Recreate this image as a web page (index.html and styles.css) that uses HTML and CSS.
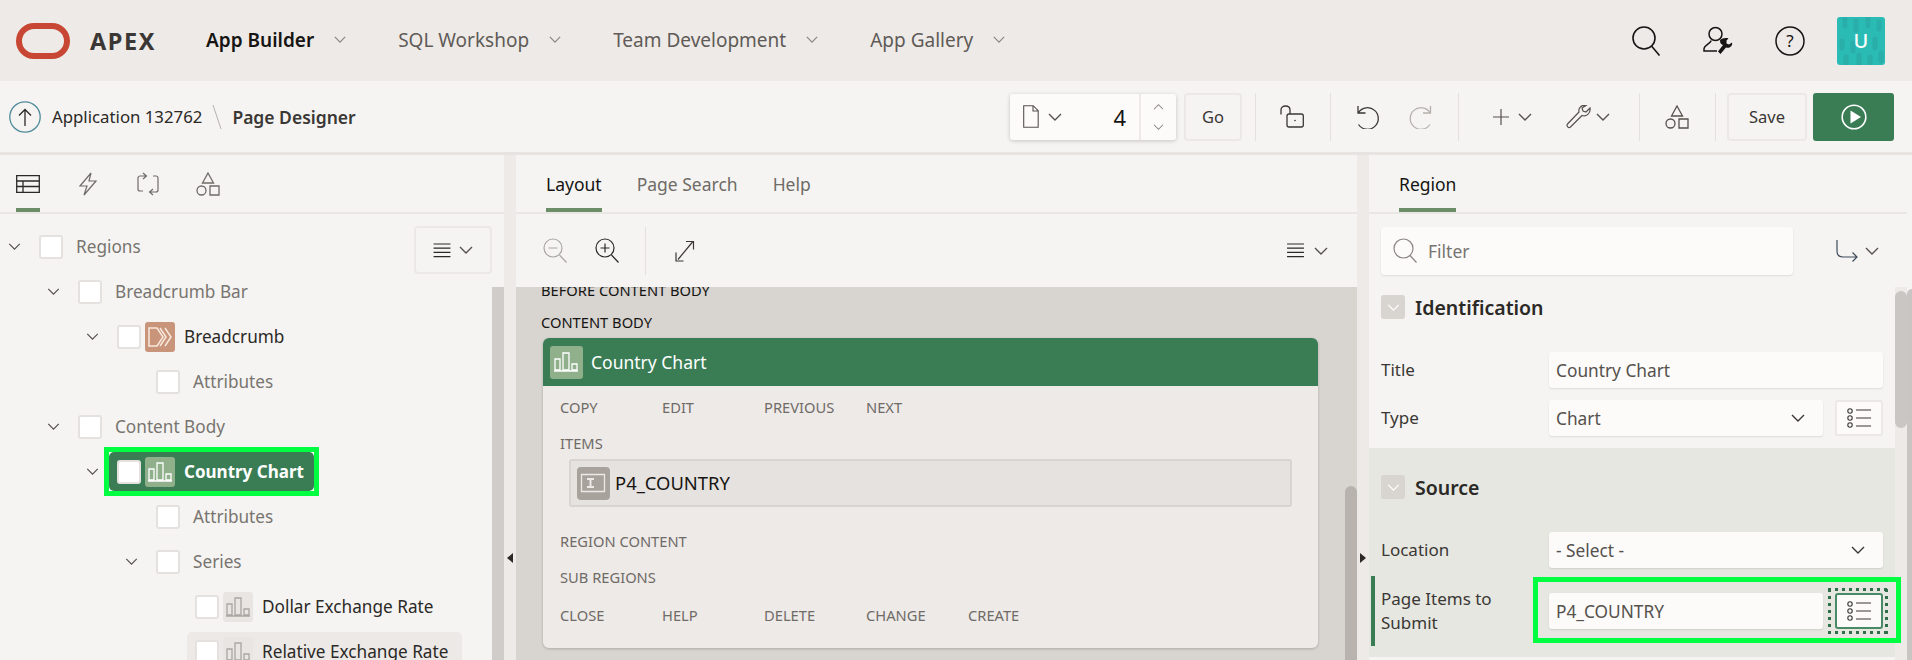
FILE: index.html
```html
<!DOCTYPE html>
<html>
<head>
<meta charset="utf-8">
<title>Page Designer</title>
<link rel="stylesheet" href="styles.css">
</head>
<body>

<svg class="defs" width="0" height="0">
  <symbol id="chev" viewBox="0 0 14 8"><path d="M1 1l6 6 6-6" fill="none" stroke="currentColor" stroke-width="1.4"/></symbol>
  <symbol id="shapes" viewBox="0 0 24 24"><path d="M12 1l5.500 10h-11z M14 14h9v9h-9z" fill="none" stroke="currentColor" stroke-width="1.3"/><circle cx="5.500" cy="18.500" r="4.500" fill="none" stroke="currentColor" stroke-width="1.3"/></symbol>
  <symbol id="menu" viewBox="0 0 18 16"><path d="M0 1h18M0 5.500h18M0 10h18M0 14.500h18" fill="none" stroke="currentColor" stroke-width="1.2"/></symbol>
  <symbol id="chart" viewBox="0 0 30 30"><path d="M4 12h5v11H4z M12 6h6v17h-6z M21 17h5v6h-5z M3 24h24" fill="none" stroke="currentColor" stroke-width="1.3"/></symbol>
  <symbol id="list" viewBox="0 0 24 20"><circle cx="3" cy="3" r="2.200" fill="none" stroke="currentColor" stroke-width="1.100"/><circle cx="3" cy="10" r="2.200" fill="none" stroke="currentColor" stroke-width="1.100"/><circle cx="3" cy="17" r="2.200" fill="none" stroke="currentColor" stroke-width="1.100"/><path d="M9 2h15M9 10h15M9 18h15" fill="none" stroke="currentColor" stroke-width="1.100"/></symbol>
</svg>

<div class="topbar">
  <svg class="logo" width="54" height="36" viewBox="0 0 54 36"><rect x="3" y="3" width="48" height="30" rx="15" fill="none" stroke="#c74634" stroke-width="6"/></svg>
  <span class="brand">APEX</span>
  <div class="nav">
    <span class="nav-item active">App Builder <svg class="chev-s"><use href="#chev"/></svg></span>
    <span class="nav-item">SQL Workshop <svg class="chev-s"><use href="#chev"/></svg></span>
    <span class="nav-item">Team Development <svg class="chev-s"><use href="#chev"/></svg></span>
    <span class="nav-item">App Gallery <svg class="chev-s"><use href="#chev"/></svg></span>
  </div>
  <div class="top-right">
    <svg width="30" height="30" viewBox="0 0 30 30"><circle cx="13" cy="12" r="11" fill="none" stroke="#161513" stroke-width="1.600"/><path d="M20.500 20l8 9.500" stroke="#161513" stroke-width="1.600"/></svg>
    <svg width="30" height="30" viewBox="0 0 30 30"><circle cx="12.500" cy="8" r="6.500" fill="none" stroke="#161513" stroke-width="1.500"/><path d="M8 14.500c0 3-7 4.500-7 8.500v2h13" fill="none" stroke="#161513" stroke-width="1.500"/><path d="M17 14.500c0 3 1.500 4 3 4.500l-5 6.500 2.500 2.500 5.500-6.500c3 1 7-1 6-5l-3 2-2.500-1 0-3 2-2c-3-1-8 0-8.500 2z" fill="#161513"/></svg>
    <svg width="30" height="30" viewBox="0 0 30 30"><circle cx="15" cy="15" r="14" fill="none" stroke="#161513" stroke-width="1.500"/><text x="15" y="20.500" text-anchor="middle" class="help-q">?</text></svg>
    <div class="avatar">
      <svg class="avatar-bg" width="48" height="48" viewBox="0 0 48 48"><path d="M8 2v7M19 4v9M31 1v8M42 5v7M5 24v7M16 26v8M38 22v9M9 40v7M22 38v9M33 40v7M44 36v8" fill="none" stroke="#29aea9" stroke-width="5" stroke-linecap="round"/></svg>
      <span class="avatar-txt">U</span>
    </div>
  </div>
</div>

<div class="toolbar">
  <svg class="up" width="32" height="32" viewBox="0 0 32 32"><circle cx="16" cy="16" r="15.200" fill="none" stroke="#4f8a9a" stroke-width="1.300"/><path d="M16 25V9M10 14.500L16 8.500l6 6" fill="none" stroke="#2b2926" stroke-width="1.300"/></svg>
  <span class="crumb">Application 132762</span>
  <svg class="slash" width="10" height="24" viewBox="0 0 10 24"><path d="M1 0l8 24" stroke="#b5b1ad" stroke-width="1"/></svg>
  <span class="crumb-cur">Page Designer</span>

  <div class="tools">
    <div class="page-box">
      <svg width="16" height="23" viewBox="0 0 16 23"><path d="M.7.700h9.500l5 5v16.600H.7z M10 1v5h5" fill="none" stroke="#55514d" stroke-width="1.100"/></svg>
      <svg class="chev-t"><use href="#chev"/></svg>
      <span class="page-num">4</span>
      <div class="page-spin">
        <svg class="chev-u"><use href="#chev"/></svg>
        <svg class="chev-d"><use href="#chev"/></svg>
      </div>
    </div>
    <span class="btn btn-go">Go</span>
    <span class="sep sep-go"></span>
    <svg width="24" height="24" viewBox="0 0 24 24"><path d="M1 9.500V5c0-2.500 2-4 4.500-4S10 2.500 10 5v4" fill="none" stroke="#3a3735" stroke-width="1.300"/><rect x="7" y="9" width="16.300" height="13" rx="2" fill="none" stroke="#3a3735" stroke-width="1.300"/><circle cx="15" cy="15.500" r=".8" fill="#3a3735"/></svg>
    <span class="sep"></span>
    <svg class="undo-i" width="23" height="24" viewBox="0 0 23 24"><path d="M1 1v7h7.500 M1.500 7.500A10.800 10.800 0 1 1 1.500 19.500" fill="none" stroke="#3a3735" stroke-width="1.300"/></svg>
    <svg class="redo-i" width="24" height="24" viewBox="0 0 24 24"><path d="M22.500 1v7h-7.500 M22 7.500A10.800 10.800 0 1 0 22 19.500" fill="none" stroke="#b5b1ad" stroke-width="1.300"/></svg>
    <span class="sep"></span>
    <svg class="plus-i" width="16" height="16" viewBox="0 0 16 16"><path d="M8 0v16M0 8h16" stroke="#55514d" stroke-width="1.200"/></svg>
    <svg class="chev-t chev-plus"><use href="#chev"/></svg>
    <svg class="wrench-i" width="25" height="24" viewBox="0 0 25 24"><path d="M24 3l-4 4-3-1-1-3 4-2.500c-4-1-8 2-7 6.500L1.500 19c-1.500 2 1 4.500 3 3L16 10.500c4 1.500 9-2 8-7.500z" fill="none" stroke="#55514d" stroke-width="1.200"/></svg>
    <svg class="chev-t chev-wrench"><use href="#chev"/></svg>
    <span class="sep sep-wrench"></span>
    <svg class="shapes-t" width="24" height="24"><use href="#shapes"/></svg>
    <span class="sep sep-save"></span>
    <span class="btn btn-save">Save</span>
    <span class="btn-run">
      <svg width="26" height="26" viewBox="0 0 26 26"><circle cx="13" cy="13" r="11.800" fill="none" stroke="#fff" stroke-width="1.600"/><path d="M9.500 6.500L20 13 9.500 19.500z" fill="#fff"/></svg>
    </span>
  </div>
</div>

<div class="main">

  <div class="panel">
    <div class="tabs tabs-icons">
      <span class="tab tab-on">
        <svg width="24" height="18" viewBox="0 0 24 18"><path d="M.7.700h22.600v16.600H.7z M.7 6h22.600 M7 6v11.300 M.7 11.500H23.300" fill="none" stroke="#2b2926" stroke-width="1.300"/></svg>
      </span>
      <span class="tab"><svg width="24" height="24" viewBox="0 0 24 24"><path d="M15 1L4 14h7l-3 9 12-14h-7z" fill="none" stroke="#6f6b67" stroke-width="1.200"/></svg></span>
      <span class="tab"><svg width="24" height="24" viewBox="0 0 24 24"><path d="M10 4H4a2 2 0 0 0-2 2v11a2 2 0 0 0 2 2h3 M14 20h6a2 2 0 0 0 2-2V6a2 2 0 0 0-2-2h-3 M7 1l3.500 3L7 7 M17 17l-3.500 3 3.500 3" fill="none" stroke="#6f6b67" stroke-width="1.200"/></svg></span>
      <span class="tab"><svg class="muted" width="24" height="24"><use href="#shapes"/></svg></span>
    </div>
    <div class="tree">
      <span class="btn tree-menu"><svg class="menu-i" width="18" height="15"><use href="#menu"/></svg><svg class="chev-t"><use href="#chev"/></svg></span>
      <div class="tree-scroll"></div>

      <div class="row"><svg class="tw"><use href="#chev"/></svg><span class="cb"></span><span class="lbl muted-t">Regions</span></div>
      <div class="row lv1"><svg class="tw"><use href="#chev"/></svg><span class="cb"></span><span class="lbl muted-t">Breadcrumb Bar</span></div>
      <div class="row lv2">
        <svg class="tw"><use href="#chev"/></svg><span class="cb"></span>
        <span class="ico ico-crumb"><svg width="30" height="30" viewBox="0 0 30 30"><path d="M4 6h8l6 9-6 9H4z M15 6l6 9-6 9 M20 6l6 9-6 9" fill="none" stroke="#f8e8dc" stroke-width="1.500"/></svg></span>
        <span class="lbl">Breadcrumb</span>
      </div>
      <div class="row lv3"><span class="tw"></span><span class="cb"></span><span class="lbl muted-t">Attributes</span></div>
      <div class="row lv1"><svg class="tw"><use href="#chev"/></svg><span class="cb"></span><span class="lbl muted-t">Content Body</span></div>
      <div class="row lv2">
        <svg class="tw"><use href="#chev"/></svg>
        <div class="row-sel"><div class="row-box row-box-on">
          <span class="cb"></span>
          <span class="ico ico-chart"><svg width="30" height="30"><use href="#chart"/></svg></span>
          <span class="lbl lbl-on">Country Chart</span>
        </div></div>
      </div>
      <div class="row lv3"><span class="tw"></span><span class="cb"></span><span class="lbl muted-t">Attributes</span></div>
      <div class="row lv3"><svg class="tw"><use href="#chev"/></svg><span class="cb"></span><span class="lbl muted-t">Series</span></div>
      <div class="row lv4">
        <span class="tw"></span><span class="cb"></span>
        <span class="ico ico-grey"><svg width="30" height="30"><use href="#chart"/></svg></span>
        <span class="lbl">Dollar Exchange Rate</span>
      </div>
      <div class="row lv4">
        <span class="tw"></span>
        <div class="row-box row-box-hover">
          <span class="cb"></span>
          <span class="ico ico-grey"><svg width="30" height="30"><use href="#chart"/></svg></span>
          <span class="lbl">Relative Exchange Rate</span>
        </div>
      </div>
    </div>
  </div>

  <div class="gutter"><span class="arrow-l"></span></div>

  <div class="panel">
    <div class="tabs tabs-text">
      <span class="tab tab-on">Layout</span>
      <span class="tab">Page Search</span>
      <span class="tab">Help</span>
    </div>
    <div class="grid-tools">
      <svg width="24" height="25" viewBox="0 0 24 25"><circle cx="10" cy="10" r="9" fill="none" stroke="#aaa6a2" stroke-width="1.200"/><path d="M5.500 10h9M16.500 17l7 7.500" fill="none" stroke="#aaa6a2" stroke-width="1.200"/></svg>
      <svg class="zoom-in" width="24" height="25" viewBox="0 0 24 25"><circle cx="10" cy="10" r="9" fill="none" stroke="#2b2926" stroke-width="1.200"/><path d="M5.500 10h9M10 5.500v9M16.500 17l7 7.500" fill="none" stroke="#2b2926" stroke-width="1.200"/></svg>
      <span class="sep sep-grid"></span>
      <svg width="20" height="22" viewBox="0 0 20 22"><path d="M3 19.500L17.500 2 M11 1.500h7.500v8 M1 12.500v8.500h7.500" fill="none" stroke="#3a3735" stroke-width="1.200"/></svg>
      <span class="grid-menu"><svg class="menu-g" width="17" height="15"><use href="#menu"/></svg><svg class="chev-t"><use href="#chev"/></svg></span>
    </div>
    <div class="canvas">
      <div class="canvas-scroll"></div>
      <div class="slot slot-clip">BEFORE CONTENT BODY</div>
      <div class="slot slot-body">CONTENT BODY</div>
      <div class="card">
        <div class="card-head">
          <span class="ico ico-chart ico-tall"><svg width="30" height="30"><use href="#chart"/></svg></span>
          <span class="card-title">Country Chart</span>
        </div>
        <div class="card-body">
          <div class="cells"><span>COPY</span><span>EDIT</span><span>PREVIOUS</span><span>NEXT</span></div>
          <div class="slot-name slot-items">ITEMS</div>
          <div class="item">
            <span class="item-ico"><svg width="33" height="33" viewBox="0 0 33 33"><path d="M4.500 7.500h23v17h-23z" fill="none" stroke="#ece9e6" stroke-width="1.300"/><path d="M10 12h7M10 20h7M13.500 12v8" fill="none" stroke="#ece9e6" stroke-width="2"/></svg></span>
            <span class="item-txt">P4_COUNTRY</span>
          </div>
          <div class="slot-name slot-content">REGION CONTENT</div>
          <div class="slot-name slot-sub">SUB REGIONS</div>
          <div class="cells cells-end"><span>CLOSE</span><span>HELP</span><span>DELETE</span><span>CHANGE</span><span>CREATE</span></div>
        </div>
      </div>
    </div>
  </div>

  <div class="gutter"><span class="arrow-r"></span></div>

  <div class="panel">
    <div class="tabs tabs-text">
      <span class="tab tab-on">Region</span>
    </div>
    <div class="prop-tools">
      <div class="filter">
        <svg width="24" height="25" viewBox="0 0 24 25"><circle cx="10.500" cy="10.500" r="9.500" fill="none" stroke="#8a8682" stroke-width="1.200"/><path d="M17 17.500l6.500 7" stroke="#8a8682" stroke-width="1.200"/></svg>
        <span class="filter-txt">Filter</span>
      </div>
      <svg class="goto" width="22" height="22" viewBox="0 0 22 22"><path d="M1 0v11c0 4 2 6 6 6h14 M16.500 12.500l4.500 4.500-4.500 4.500" fill="none" stroke="#3d4a5c" stroke-width="1.200"/></svg>
      <svg class="chev-t"><use href="#chev"/></svg>
    </div>
    <div class="props">
      <div class="props-track"><div class="props-thumb"></div></div>

      <div class="group">
        <div class="group-head"><span class="toggle"><svg class="chev-w"><use href="#chev"/></svg></span><span class="group-name">Identification</span></div>
        <div class="prop">
          <span class="prop-lbl">Title</span>
          <div class="prop-val"><span class="input">Country Chart</span></div>
        </div>
        <div class="prop">
          <span class="prop-lbl">Type</span>
          <div class="prop-val">
            <span class="input select">Chart <svg class="chev-sel"><use href="#chev"/></svg></span>
            <span class="list-btn"><svg width="24" height="20"><use href="#list"/></svg></span>
          </div>
        </div>
      </div>

      <div class="group group-cur">
        <div class="group-head"><span class="toggle"><svg class="chev-w"><use href="#chev"/></svg></span><span class="group-name">Source</span></div>
        <div class="prop">
          <span class="prop-lbl">Location</span>
          <div class="prop-val"><span class="input select">- Select - <svg class="chev-sel"><use href="#chev"/></svg></span></div>
        </div>
        <div class="prop prop-tall">
          <span class="prop-lbl">Page Items to Submit</span>
          <div class="prop-val">
            <span class="input">P4_COUNTRY</span>
            <span class="list-btn list-btn-on"><svg width="24" height="20"><use href="#list"/></svg></span>
            <div class="callout"></div>
          </div>
        </div>
      </div>
    </div>
  </div>

  <div class="edge"><div class="edge-thumb"></div></div>

</div>

</body>
</html>
```

FILE: styles.css
```css
* {box-sizing: border-box;}

html, body {
  margin: 0;
  height: 660px;
  overflow: hidden;
}

body {
  font-family: "Noto Sans", "Open Sans", Arial, sans-serif;
  font-size: 16px;
  color: #161513;
  background-color: #eeeae7;
}

.defs {position: absolute;}

svg {display: block; flex: none;}

/* Top bar */
.topbar {
  display: flex;
  align-items: center;
  height: 81px;
  padding-left: 16px;
  background-color: #eeeae7;
}

.brand {
  margin-left: 20px;
  width: 116px;
  font-size: 23.500px;
  font-weight: 700;
  letter-spacing: 1.600px;
  color: #3a3735;
}

.nav {display: flex; gap: 52px; padding-bottom: 2px;}

.nav-item {
  display: flex;
  align-items: center;
  gap: 20px;
  font-size: 19px;
  color: #5f5b57;
}

.nav-item.active {
  font-weight: 600;
  color: #161513;
}

.chev-s {width: 12px; height: 7px; color: #8a8682;}

.top-right {
  display: flex;
  align-items: center;
  gap: 42px;
  margin-left: auto;
  padding-right: 27px;
}

.help-q {font-size: 17px; fill: #161513;}

.avatar {
  position: relative;
  display: flex;
  align-items: center;
  justify-content: center;
  width: 48px;
  height: 48px;
  margin-left: -10px;
  border-radius: 3px;
  background-color: #2bbbb5;
  overflow: hidden;
}

.avatar-bg {position: absolute; left: 0; top: 0;}

.avatar-txt {
  position: relative;
  font-size: 20px;
  font-weight: 500;
  color: #fff;
}

/* Page toolbar */
.toolbar {
  display: flex;
  align-items: center;
  height: 74px;
  padding-left: 9px;
  border-bottom: 3px solid #e6e3e0;
  background-color: #f5f4f2;
}

.crumb {margin-left: 11px; font-size: 16.800px; color: #2b2926;}
.slash {margin: 0 10px 0 10px;}
.crumb-cur {font-size: 17.500px; font-weight: 600; color: #3a3735;}

.tools {
  display: flex;
  align-items: center;
  margin-left: auto;
  padding-right: 18px;
  color: #55514d;
}

.page-box {
  display: flex;
  align-items: center;
  width: 166px;
  height: 46px;
  padding-left: 13px;
  border-radius: 3px;
  background-color: #fcfbfa;
  box-shadow: 0 1px 4px rgba(0,0,0,0.2);
}

.chev-t {width: 14px; height: 8px; color: #55514d;}
.page-box .chev-t {margin-left: 9px;}

.page-num {
  margin-left: auto;
  margin-right: 13px;
  font-size: 22px;
  color: #161513;
}

.page-spin {
  display: flex;
  flex-direction: column;
  justify-content: center;
  gap: 14px;
  align-items: center;
  width: 37px;
  height: 100%;
  border-left: 2px solid #eeeae7;
}

.chev-u {width: 11px; height: 6px; color: #8a8682; transform: rotate(180deg);}
.chev-d {width: 11px; height: 6px; color: #8a8682;}

.btn {
  display: flex;
  align-items: center;
  justify-content: center;
  height: 48px;
  border: 2px solid #ebe8e5;
  border-radius: 4px;
  font-size: 16.500px;
  color: #3a3735;
  background-color: #f5f4f2;
}

.btn-go {width: 58px; margin-left: 8px;}
.btn-save {width: 80px;}

.sep {
  display: block;
  width: 1px;
  height: 48px;
  margin: 0 26px;
  background-color: #e3e0dd;
}

.sep-go {margin-left: 13px; margin-right: 24px;}
.sep-wrench {margin-left: 29px; margin-right: 25px;}
.sep-save {margin-right: 11px;}

.redo-i {margin-left: 28px;}
.plus-i {margin-left: 8px;}
.chev-plus {margin-left: 9px;}
.wrench-i {margin-left: 34px;}
.chev-wrench {margin-left: 5px;}

.btn-run {
  display: flex;
  align-items: center;
  justify-content: center;
  width: 81px;
  height: 48px;
  margin-left: 6px;
  border-radius: 3px;
  background-color: #3a7d55;
}

/* Three panels */
.main {
  display: grid;
  grid-template-columns: 504px 12px 841px 12px 538px 5px;
  height: 505px;
}

.panel {
  display: flex;
  flex-direction: column;
  min-width: 0;
  background-color: #f5f4f2;
}

.gutter {
  display: flex;
  align-items: flex-start;
  justify-content: center;
  padding-top: 398px;
  background-color: #eeeae7;
}

.arrow-l, .arrow-r {
  width: 0;
  height: 0;
  border-top: 5px solid transparent;
  border-bottom: 5px solid transparent;
}

.arrow-l {border-right: 6px solid #2b2926;}
.arrow-r {border-left: 6px solid #2b2926;}

.edge {
  padding-top: 134px;
  background-color: #f5f4f2;
}

.edge-thumb {
  height: 100%;
  border-radius: 5px 0 0 0;
  background-color: #c8c5c2;
}

.tabs {
  display: flex;
  flex: none;
  height: 59px;
  border-bottom: 2px solid #e9e6e3;
}

.tabs-text {gap: 35px; padding-left: 30px;}
.tabs-icons {gap: 36px; padding-left: 16px;}

.tab {
  display: flex;
  align-items: center;
  height: 57px;
  padding-top: 4px;
  border-bottom: 4px solid transparent;
  font-size: 17.500px;
  color: #6f6b67;
}

.tab-on {
  color: #161513;
  border-bottom-color: #6b8e68;
}

.muted {color: #6f6b67;}

/* Left tree */
.tree {
  position: relative;
  flex: 1;
  padding-top: 10px;
  overflow: hidden;
}

.tree-menu {
  position: absolute;
  left: 414px;
  top: 12px;
  width: 78px;
  gap: 8px;
}

.menu-i {color: #2b2926;}

.tree-scroll {
  position: absolute;
  left: 492px;
  top: 73px;
  bottom: 0;
  width: 12px;
  background-color: #cfccc9;
}

.row {
  display: flex;
  align-items: center;
  height: 45px;
  padding-left: 8px;
  font-size: 17.200px;
}

.lv1 {padding-left: 47px;}
.lv2 {padding-left: 86px;}
.lv3 {padding-left: 125px;}
.lv4 {padding-left: 164px;}

.tw {
  width: 13px;
  height: 7px;
  margin-right: 18px;
  color: #55514d;
  flex: none;
}

.cb {
  flex: none;
  width: 24px;
  height: 24px;
  margin-right: 13px;
  border: 2px solid #e4e1de;
  border-radius: 3px;
  background-color: #fff;
}

.ico {
  display: flex;
  flex: none;
  width: 30px;
  height: 30px;
  margin-left: -9px;
  margin-right: 9px;
  border-radius: 3px;
}

.ico-crumb {background-color: #c9957a;}
.ico-chart {background-color: #8fb08a; color: #fff;}
.ico-grey {background-color: #e8e5e2; color: #aaa6a2;}

.lbl {white-space: nowrap; color: #2b2926;}
.muted-t {color: #787470;}
.lbl-on {font-weight: 700; font-size: 17px; color: #fff;}

.row-sel {
  margin-left: -8px;
  background-color: #fff;
  outline: 5px solid #00ff40;
}

.row-box {
  display: flex;
  align-items: center;
  height: 39px;
  padding-left: 8px;
  border-radius: 5px;
}

.row-box-on {
  width: 205px;
  background-color: #3a7d55;
}

.row-box-hover {
  width: 275px;
  margin-left: -8px;
  background-color: #ece9e6;
}

/* Layout grid */
.grid-tools {
  display: flex;
  flex: none;
  align-items: center;
  height: 73px;
  padding-left: 27px;
}

.zoom-in {margin-left: 28px;}
.sep-grid {margin-left: 26px; margin-right: 29px;}

.grid-menu {
  display: flex;
  align-items: center;
  gap: 10px;
  margin-left: auto;
  margin-right: 29px;
}

.menu-g {color: #2b2926;}

.canvas {
  position: relative;
  flex: 1;
  background-color: #d8d4d0;
  overflow: hidden;
}

.canvas-scroll {
  position: absolute;
  right: 0;
  top: 199px;
  bottom: 0;
  width: 12px;
  border-radius: 6px 6px 0 0;
  background-color: #b8b3ae;
}

.slot {
  height: 20px;
  margin-left: 25px;
  font-size: 14.700px;
  line-height: 18px;
  color: #161513;
}

.slot-clip {margin-top: -6px;}
.slot-body {margin-top: 12px;}

.card {
  width: 775px;
  height: 310px;
  margin-top: 5px;
  margin-left: 27px;
  border-radius: 6px;
  background-color: #eeeae7;
  box-shadow: 0 1px 3px rgba(0,0,0,0.2);
  overflow: hidden;
}

.card-head {
  display: flex;
  align-items: center;
  height: 48px;
  padding-left: 7px;
  background-color: #3a7d55;
}

.ico-tall {height: 33px; width: 33px; margin-left: 0; margin-right: 8px; padding: 1px;}

.card-title {font-size: 17.500px; color: #fff;}

.card-body {padding: 12px 0 0 17px;}

.cells {
  display: flex;
  height: 20px;
  font-size: 14.700px;
  line-height: 18px;
  color: #6f6b67;
}

.cells span {width: 102px;}

.slot-name {
  height: 20px;
  font-size: 14.700px;
  line-height: 18px;
  color: #6f6b67;
}

.slot-items {margin-top: 16px;}
.slot-content {margin-top: 25px;}
.slot-sub {margin-top: 16px;}
.cells-end {margin-top: 18px;}

.item {
  display: flex;
  align-items: center;
  width: 723px;
  height: 48px;
  margin: 5px 0 0 9px;
  padding-left: 6px;
  border: 2px solid #d8d4d0;
  border-radius: 3px;
  background-color: #e6e2df;
}

.item-ico {
  display: flex;
  width: 33px;
  height: 33px;
  margin-right: 5px;
  border-radius: 4px;
  background-color: #a8a29c;
}

.item-txt {padding-bottom: 2px; font-size: 18.400px; color: #161513;}

/* Properties */
.prop-tools {
  display: flex;
  flex: none;
  align-items: center;
  height: 73px;
  padding-left: 12px;
}

.filter {
  display: flex;
  align-items: center;
  width: 412px;
  height: 48px;
  padding-left: 12px;
  border-radius: 4px;
  background-color: #fcfbfa;
  box-shadow: 0 1px 2px rgba(0,0,0,0.1);
}

.filter-txt {margin-left: 11px; font-size: 17.500px; color: #787470;}

.goto {margin-left: 43px;}
.prop-tools .chev-t {margin-left: 7px;}

.props {
  position: relative;
  flex: 1;
  padding-right: 12px;
}

.props-track {
  position: absolute;
  right: 0;
  top: 0;
  bottom: 0;
  width: 12px;
  padding-top: 4px;
  background-color: #eeeae7;
}

.props-thumb {
  height: 137px;
  border-radius: 6px;
  background-color: #c9c6c3;
}

.group {padding: 8px 0 12px 12px;}

.group-cur {
  position: relative;
  padding-top: 27px;
  padding-bottom: 11px;
  background-color: #e6e7e0;
}

.group-head {
  display: flex;
  align-items: center;
  height: 24px;
  margin-bottom: 33px;
}

.toggle {
  display: flex;
  align-items: center;
  justify-content: center;
  width: 24px;
  height: 24px;
  border-radius: 3px;
  background-color: #d8d4d0;
}

.chev-w {width: 13px; height: 7px; color: #fff;}

.group-name {
  margin-left: 10px;
  padding-top: 1px;
  font-size: 19.500px;
  font-weight: 600;
  color: #2b2926;
}

.prop {
  display: grid;
  grid-template-columns: 168px 334px;
  align-items: center;
  margin-bottom: 12px;
}

.prop:last-child {margin-bottom: 0;}

.prop-tall {
  position: relative;
  height: 70px;
  margin-top: -4px;
}

.prop-tall::before {
  content: "";
  position: absolute;
  left: -10px;
  top: 0;
  bottom: 0;
  width: 4px;
  background-color: #3a7d55;
}

.prop-lbl {
  font-size: 17px;
  line-height: 24px;
  color: #3a3735;
}

.prop-tall .prop-lbl {width: 130px;}

.prop-val {
  position: relative;
  display: flex;
  gap: 12px;
}

.input {
  display: flex;
  align-items: center;
  flex: 1;
  height: 36px;
  padding-left: 7px;
  border-radius: 3px;
  font-size: 17.300px;
  color: #55514d;
  background-color: #fcfbfa;
  box-shadow: 0 1px 2px rgba(0,0,0,0.1);
}

.select {justify-content: space-between; white-space: pre;}

.chev-sel {
  width: 14px;
  height: 8px;
  margin-right: 18px;
  color: #3a3735;
}

.list-btn {
  position: relative;
  display: flex;
  align-items: center;
  justify-content: center;
  width: 48px;
  height: 36px;
  border: 2px solid #ebe8e5;
  border-radius: 3px;
  color: #3a3735;
  background-color: #fcfbfa;
}

.list-btn-on {border-color: #4a8a66;}

/* square dots round the focused button */
.list-btn-on::after {
  content: "";
  position: absolute;
  left: -9px;
  right: -7px;
  top: -7px;
  bottom: -7px;
  background:
    repeating-linear-gradient(90deg, #2f6e49 0 3px, transparent 3px 7px) left top / 100% 3px no-repeat,
    repeating-linear-gradient(90deg, #2f6e49 0 3px, transparent 3px 7px) left bottom / 100% 3px no-repeat,
    repeating-linear-gradient(0deg, #2f6e49 0 3px, transparent 3px 7px) left top / 3px 100% no-repeat,
    repeating-linear-gradient(0deg, #2f6e49 0 3px, transparent 3px 7px) right top / 3px 100% no-repeat;
}

.callout {
  position: absolute;
  left: -16px;
  right: -18px;
  top: -16px;
  bottom: -14px;
  border: 5px solid #00ff40;
}
```
